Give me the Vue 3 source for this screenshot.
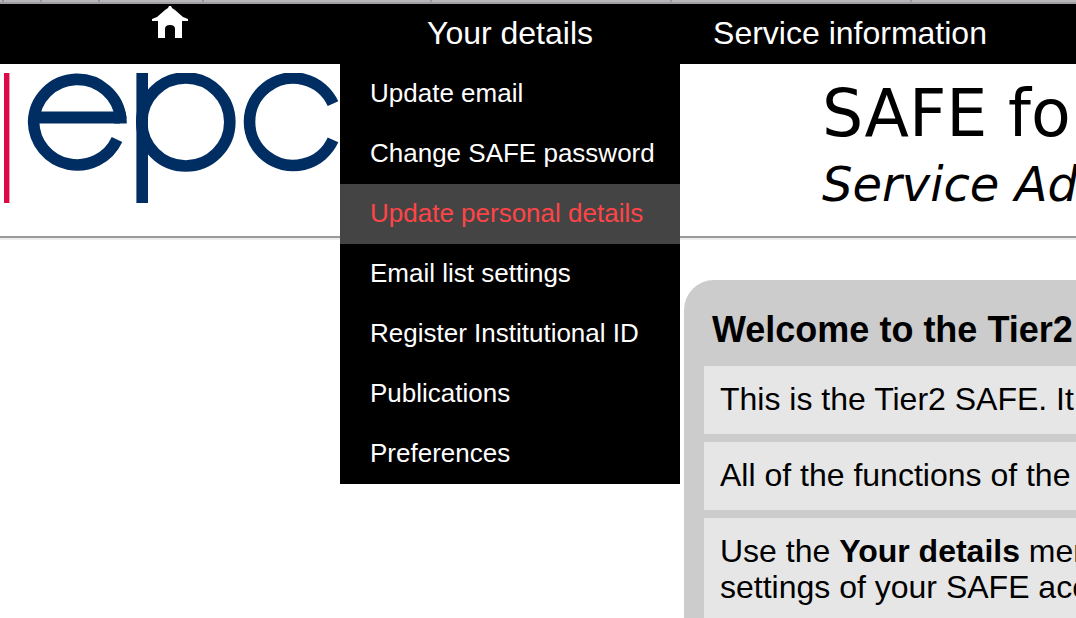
<script setup>
import { ref } from 'vue'

const menuItems = [
  'Update email',
  'Change SAFE password',
  'Update personal details',
  'Email list settings',
  'Register Institutional ID',
  'Publications',
  'Preferences',
]
const active = ref(2)
</script>

<template>
  <div class="page">
    <div class="tabs" aria-hidden="true">
      <i v-for="n in 8" :key="n"></i>
    </div>

    <nav class="nav">
      <div class="nav-item">
        <a href="#" class="home" aria-label="Home">
          <svg width="36" height="32" viewBox="0 0 36 32">
            <path
              fill="#fff"
              d="M17 0h2l1 2 3 2 8 7 5 2v2h-6v17h-7v-9q0-4-5-4t-5 4v9H6V15H0v-2l5-2 8-7 3-2z"
            />
          </svg>
        </a>
      </div>
      <div class="nav-item">
        <a href="#" class="nav-link">Your details</a>
        <ul class="menu">
          <li v-for="(item, i) in menuItems" :key="item">
            <a href="#" :class="{ active: i === active }" @mouseenter="active = i">{{ item }}</a>
          </li>
        </ul>
      </div>
      <div class="nav-item">
        <a href="#" class="nav-link">Service information</a>
      </div>
    </nav>

    <header class="header">
      <svg class="logo" width="336" height="130" viewBox="4 73 336 130" role="img" aria-label="epcc">
        <rect x="4" y="73" width="5.4" height="130" fill="#dc0a46" />
        <g fill="none" stroke="#002d62" stroke-width="11.6">
          <path d="M117 139.5A43.7 43.7 0 0 1 33.6 122A43.7 43.7 0 0 1 120.8 119" />
          <path d="M36 117.4h84" stroke-width="12" />
          <path d="M114 111.4h11.4q1.4 5 1.4 12H114z" fill="#002d62" stroke="none" />
          <path d="M142.2 70v136" />
          <circle cx="185.8" cy="122" r="44" />
          <path d="M333 103.7A43.7 43.7 0 1 0 333 139.9" />
        </g>
      </svg>
      <div class="titles">
        <h1>SAFE for</h1>
        <p>Service Ad</p>
      </div>
    </header>

    <main class="panel">
      <h2>Welcome to the Tier2</h2>
      <p>This is the Tier2 SAFE. It</p>
      <p>All of the functions of the</p>
      <p>Use the <b>Your details</b> menu<br />settings of your SAFE account</p>
    </main>
  </div>
</template>

<style>
body {
  margin: 0;
  background: #fff;
}
</style>

<style scoped>
.page {
  height: 100vh;
  overflow: hidden;
  color: #000;
  font-family: "Liberation Sans", Arial, sans-serif;
  font-size: 32px;
}

.tabs {
  display: grid;
  grid-template-columns: 4px 38px 58px 104px 228px 240px 240px 1fr;
  height: 2px;
  background: #b9b7ba;
  border-bottom: 2px solid #a09ea1;
}
.tabs i {
  border-right: 2px solid #98969a;
}
.tabs i:last-child {
  border-right: 0;
}

.nav {
  display: flex;
  height: 60px;
  background: #000;
}
.nav-item {
  position: relative;
  flex: none;
  width: 340px;
  text-align: center;
}
.home {
  display: flex;
  justify-content: center;
  padding-top: 2px;
}
.nav-link {
  display: block;
  line-height: 58px;
  color: #fff;
  text-decoration: none;
}

.menu {
  position: absolute;
  top: 100%;
  left: 0;
  z-index: 1;
  width: 100%;
  margin: 0;
  padding: 0;
  background: #000;
  list-style: none;
  text-align: left;
  font-size: 26px;
}
.menu a {
  display: block;
  padding: 0 0 2px 30px;
  line-height: 58px;
  color: #fff;
  text-decoration: none;
  white-space: nowrap;
}
.menu a.active {
  background: #444;
  color: #ff4448;
}

.header {
  display: flex;
  align-items: flex-start;
  gap: 482px;
  height: 172px;
  padding-left: 4px;
  border-bottom: 2px solid #9a9a9a;
  box-shadow: 0 2px 0 #eee;
}
.logo {
  flex: none;
  margin-top: 9px;
}
.titles {
  padding-top: 12px;
  font-family: "DejaVu Sans", Verdana, sans-serif;
  white-space: nowrap;
}
h1 {
  margin: 0;
  font-size: 65px;
  font-weight: 400;
  line-height: 76px;
}
.titles p {
  margin: 0;
  font-size: 48px;
  font-style: italic;
  line-height: 64px;
}

.panel {
  margin: 42px 0 0 684px;
  padding: 29px 0 20px 20px;
  background: #ccc;
  border-top-left-radius: 30px;
  white-space: nowrap;
}
h2 {
  margin: 0 0 15px;
  padding-left: 8px;
  font-size: 36px;
  line-height: 42px;
}
.panel p {
  margin: 0 0 8px;
  padding: 15px 16px 17px;
  overflow: hidden;
  background: #e6e6e6;
  line-height: 36px;
}
</style>
